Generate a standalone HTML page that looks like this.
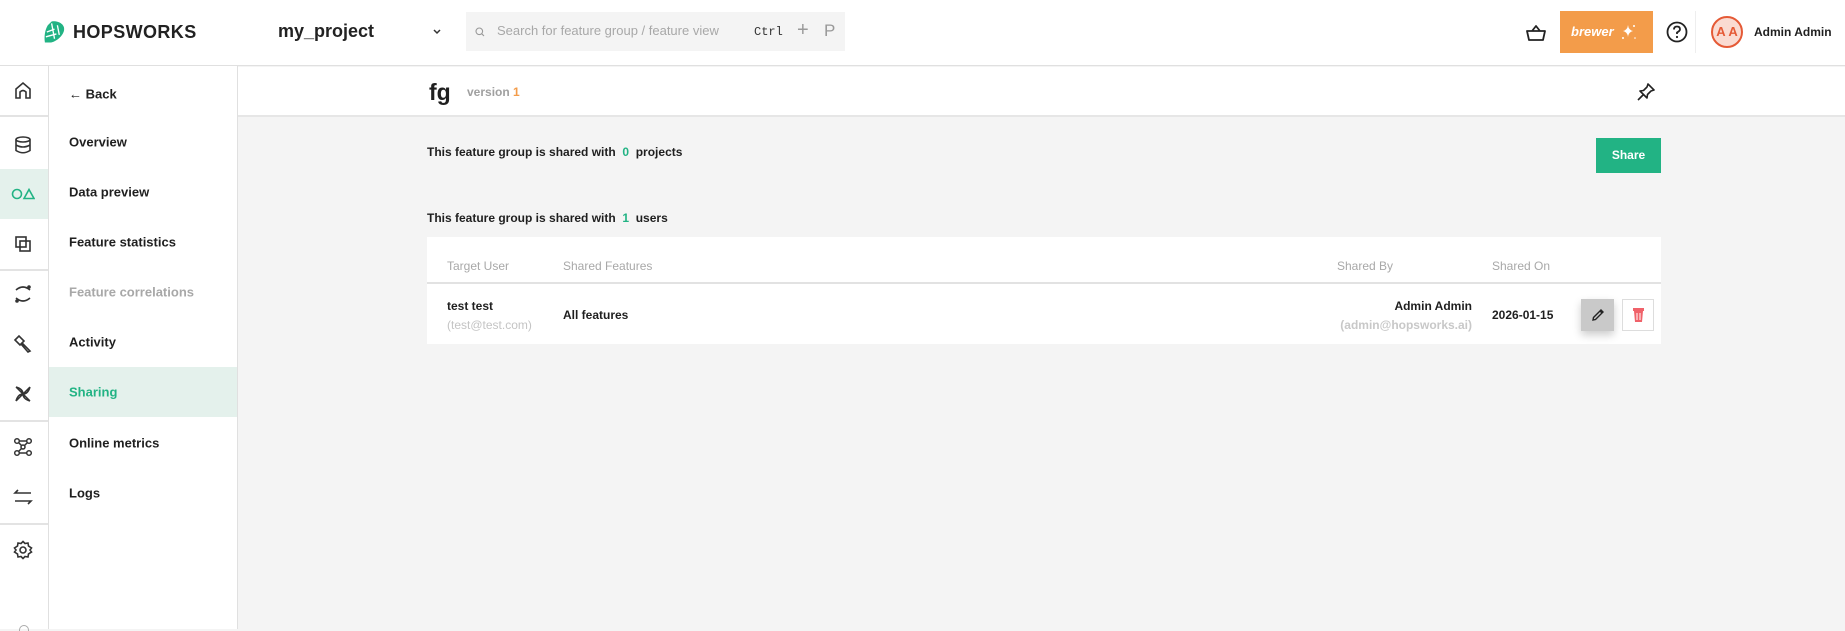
<!DOCTYPE html>
<html><head><meta charset="utf-8"><style>
*{margin:0;padding:0;box-sizing:border-box}
body{width:1845px;height:629px;overflow:hidden;background:#f4f4f4;font-family:"Liberation Sans",Arial,sans-serif;color:#1f1f1f;position:relative}
.a{position:absolute;white-space:nowrap}
.b{font-weight:bold}
.hdr{position:absolute;left:0;top:0;width:1845px;height:66px;background:#fff;border-bottom:1px solid #e0e0e0}
.rail{position:absolute;left:0;top:66px;width:49px;height:563px;background:#fff;border-right:1px solid #e0e0e0}
.sub{position:absolute;left:49px;top:66px;width:189px;height:563px;background:#fff;border-right:1px solid #e0e0e0}
.sep{position:absolute;left:0;width:48px;height:2px;background:#e3e3e3}
.nav{position:absolute;left:20px;font-size:13px;font-weight:bold;transform:translateY(-50%)}
.ic{position:absolute;left:13px}
</style></head><body>
<div class="hdr"></div>
<svg class="a" style="left:43px;top:20px" width="23" height="24" viewBox="0 0 24 24"><path d="M9 1 C16 0 23 4 22 10 C21 16 14 22 8 23 L2 23 C1 17 2 10 5 5 Z" fill="#22b384"/><path d="M4 12 L12 9 M3 17 L14 14 M9 3 L12 19 M15 5 L17 15" stroke="#fff" stroke-width="1.4" fill="none"/></svg>
<div class="a b" style="left:73px;top:22px;font-size:18px;letter-spacing:0.4px;color:#222">HOPSWORKS</div>
<div class="a b" style="left:278px;top:21px;font-size:18px;color:#222">my_project</div>
<svg class="a" style="left:432px;top:28px" width="10" height="8" viewBox="0 0 10 8"><path d="M2 2 L5 5 L8 2" stroke="#333" stroke-width="1.5" fill="none"/></svg>
<div class="a" style="left:466px;top:12px;width:379px;height:39px;background:#f4f4f4"></div>
<svg class="a" style="left:475px;top:27px" width="10" height="10" viewBox="0 0 10 10"><circle cx="4.3" cy="4.3" r="3.3" stroke="#999" stroke-width="1.1" fill="none"/><path d="M6.8 6.8 L9 9" stroke="#999" stroke-width="1.1"/></svg>
<div class="a" style="left:497px;top:23px;font-size:13px;color:#a8a8a8">Search for feature group / feature view</div>
<div class="a" style="left:754px;top:25px;font-size:12px;font-family:'Liberation Mono',monospace;color:#333">Ctrl</div>
<div class="a" style="left:797px;top:19px;font-size:20px;color:#999">+</div>
<div class="a" style="left:824px;top:21px;font-size:17px;color:#999">P</div>
<svg class="a" style="left:1526px;top:24px" width="20" height="18" viewBox="0 0 20 18"><path d="M6 7 L10 2 L14 7 M1 7 H19 L17 16 H3 Z" stroke="#222" stroke-width="1.8" fill="none" stroke-linejoin="round"/></svg>
<div class="a" style="left:1560px;top:11px;width:93px;height:42px;background:#f39c4a"></div>
<div class="a b" style="left:1571px;top:24px;font-size:13px;font-style:italic;color:#fff">brewer</div>
<svg class="a" style="left:1620px;top:23px" width="18" height="18" viewBox="0 0 18 18"><path d="M8 2 Q8.5 7 13 8 Q8.5 9 8 14 Q7.5 9 3 8 Q7.5 7 8 2Z" fill="#fff"/><circle cx="14" cy="3" r="1" fill="#fff"/><circle cx="3" cy="15" r="1" fill="#fff"/><circle cx="15" cy="15" r="0.8" fill="#fff"/></svg>
<svg class="a" style="left:1666px;top:21px" width="22" height="22" viewBox="0 0 22 22"><circle cx="11" cy="11" r="9.5" stroke="#222" stroke-width="1.8" fill="none"/><path d="M8 8.5 Q8 5.5 11 5.5 Q14 5.5 14 8.3 Q14 10 11 11.5 V13" stroke="#222" stroke-width="1.8" fill="none"/><circle cx="11" cy="16" r="1.1" fill="#222"/></svg>
<div class="a" style="left:1695px;top:11px;width:1px;height:42px;background:#eee"></div>
<div class="a" style="left:1711px;top:16px;width:32px;height:32px;border-radius:50%;border:2px solid #e55a36;background:#fadbd2;color:#e55a36;font-size:13px;font-weight:bold;text-align:center;line-height:28px">A A</div>
<div class="a b" style="left:1754px;top:25px;font-size:12px">Admin Admin</div>

<div class="rail">
<div class="sep" style="top:49px"></div>
<div class="a" style="left:0;top:103px;width:48px;height:50px;background:#e4f1ec"></div>
<div class="sep" style="top:203px"></div>
<div class="sep" style="top:354px"></div>
<div class="sep" style="top:457px"></div>
<svg class="ic" style="top:15px" width="20" height="20" viewBox="0 0 20 20" fill="none" stroke="#333" stroke-width="1.6"><path d="M3 17 V8 L10 2 L17 8 V17 H13 V11 Q10 8 7 11 V17 Z"/></svg>
<svg class="ic" style="top:69px" width="20" height="20" viewBox="0 0 20 20" fill="none" stroke="#333" stroke-width="1.6"><ellipse cx="10" cy="4.5" rx="7" ry="2.5"/><path d="M3 4.5 V15.5 Q10 20 17 15.5 V4.5 M3 10 Q10 14 17 10"/></svg>
<svg class="ic" style="top:120px;left:11px" width="24" height="16" viewBox="0 0 24 16" fill="none" stroke="#22b384" stroke-width="1.6"><circle cx="6" cy="8" r="4.5"/><path d="M13 12.5 L18 3.5 L23 12.5 Z"/></svg>
<svg class="ic" style="top:168px" width="20" height="20" viewBox="0 0 20 20" fill="none" stroke="#333" stroke-width="1.6"><rect x="3" y="3" width="10" height="10"/><rect x="7" y="7" width="10" height="10"/></svg>
<svg class="ic" style="top:218px" width="20" height="20" viewBox="0 0 20 20" fill="none" stroke="#333" stroke-width="1.6"><path d="M3 6 Q10 0 17 6 M3 14 Q10 20 17 14"/><circle cx="16" cy="3" r="1" fill="#333"/><circle cx="4" cy="17" r="1" fill="#333"/></svg>
<svg class="ic" style="top:268px" width="20" height="20" viewBox="0 0 20 20" fill="none" stroke="#333" stroke-width="1.6"><path d="M2 6 L6 2 L11 7 L7 11 Z M9 9 L17 17 L15 18 L8 10"/></svg>
<svg class="ic" style="top:318px" width="20" height="20" viewBox="0 0 20 20" fill="none" stroke="#333" stroke-width="1.5"><path d="M3 3 L17 17 M17 3 L3 17 M3 3 Q10 5 10 10 M17 3 Q15 10 10 10 M17 17 Q10 15 10 10 M3 17 Q5 10 10 10"/></svg>
<svg class="ic" style="top:371px" width="20" height="20" viewBox="0 0 20 20" fill="none" stroke="#333" stroke-width="1.5"><circle cx="4" cy="4" r="2.3"/><circle cx="16" cy="4" r="2.3"/><circle cx="4" cy="16" r="2.3"/><circle cx="16" cy="16" r="2.3"/><circle cx="10" cy="10" r="2"/><path d="M6 4 H14 M6 16 H14 M5.5 5.5 L8.5 8.5 M14.5 5.5 L11.5 8.5 M5.5 14.5 L8.5 11.5"/></svg>
<svg class="ic" style="top:421px" width="20" height="20" viewBox="0 0 20 20" fill="none" stroke="#333" stroke-width="1.6"><path d="M18 6 H2 L5 3 M2 14 H18 L15 17"/></svg>
<svg class="ic" style="top:474px" width="20" height="20" viewBox="0 0 20 20" fill="none" stroke="#333" stroke-width="1.6"><circle cx="10" cy="10" r="3"/><path d="M10 1.5 L12 3.5 L15 3 L15.5 6 L18.5 8 L17 10 L18.5 12 L15.5 14 L15 17 L12 16.5 L10 18.5 L8 16.5 L5 17 L4.5 14 L1.5 12 L3 10 L1.5 8 L4.5 6 L5 3 L8 3.5 Z"/></svg>
<div class="a" style="left:19px;top:559px;width:10px;height:6px;border-radius:5px 5px 0 0;border:1.6px solid #aaa;border-bottom:none"></div>
</div>

<div class="sub">
<div class="a" style="left:0;top:301px;width:188px;height:50px;background:#e4f1ec"></div>
<div class="nav" style="top:28px">← Back</div>
<div class="nav" style="top:76px">Overview</div>
<div class="nav" style="top:126px">Data preview</div>
<div class="nav" style="top:176px">Feature statistics</div>
<div class="nav" style="top:226px;color:#a8a8a8">Feature correlations</div>
<div class="nav" style="top:276px">Activity</div>
<div class="nav" style="top:326px;color:#22b384">Sharing</div>
<div class="nav" style="top:377px">Online metrics</div>
<div class="nav" style="top:427px">Logs</div>
</div>

<div class="a" style="left:238px;top:67px;width:1607px;height:50px;background:#fff;border-bottom:2px solid #e6e6e6"></div>
<div class="a b" style="left:429px;top:79px;font-size:23px">fg</div>
<div class="a b" style="left:467px;top:85px;font-size:12px;color:#a0a0a0">version <span style="color:#f39c4a">1</span></div>
<svg class="a" style="left:1636px;top:82px" width="20" height="20" viewBox="0 0 20 20" fill="none" stroke="#222" stroke-width="1.6" stroke-linejoin="round"><path d="M12 2 L18 8 L15 9 L11.5 12.5 L11 16 L4 9 L7.5 8.5 L11 5 Z M7.5 12.5 L2 18"/></svg>

<div class="a b" style="left:427px;top:145px;font-size:12px">This feature group is shared with &nbsp;<span style="color:#22b384">0</span>&nbsp; projects</div>
<div class="a b" style="left:1596px;top:138px;width:65px;height:35px;background:#22b384;color:#fff;font-size:12px;text-align:center;line-height:35px">Share</div>
<div class="a b" style="left:427px;top:211px;font-size:12px">This feature group is shared with &nbsp;<span style="color:#22b384">1</span>&nbsp; users</div>

<div class="a" style="left:427px;top:237px;width:1234px;height:107px;background:#fff"></div>
<div class="a" style="left:427px;top:282px;width:1234px;height:2px;background:#e2e2e2"></div>
<div class="a" style="left:447px;top:259px;font-size:12px;color:#a8a8a8">Target User</div>
<div class="a" style="left:563px;top:259px;font-size:12px;color:#a8a8a8">Shared Features</div>
<div class="a" style="left:1337px;top:259px;font-size:12px;color:#a8a8a8">Shared By</div>
<div class="a" style="left:1492px;top:259px;font-size:12px;color:#a8a8a8">Shared On</div>
<div class="a b" style="left:447px;top:299px;font-size:12px">test test</div>
<div class="a" style="left:447px;top:318px;font-size:12px;color:#c4c4c4">(test@test.com)</div>
<div class="a b" style="left:563px;top:308px;font-size:12px">All features</div>
<div class="a b" style="left:1300px;width:172px;text-align:right;top:299px;font-size:12px">Admin Admin</div>
<div class="a b" style="left:1300px;width:172px;text-align:right;top:318px;font-size:12px;color:#c8c8c8">(admin@hopsworks.ai)</div>
<div class="a b" style="left:1492px;top:308px;font-size:12px">2026-01-15</div>
<div class="a" style="left:1581px;top:299px;width:33px;height:32px;background:#c9c9c9;box-shadow:0 4px 8px rgba(0,0,0,0.2)"></div>
<svg class="a" style="left:1591px;top:308px" width="14" height="14" viewBox="0 0 14 14" fill="none" stroke="#222" stroke-width="1.4"><path d="M2 12 L2.5 9.5 L10 2 L12 4 L4.5 11.5 Z M9 3 L11 5"/></svg>
<div class="a" style="left:1622px;top:299px;width:32px;height:32px;background:#fff;border:1px solid #ddd"></div>
<svg class="a" style="left:1632px;top:307px" width="13" height="16" viewBox="0 0 13 16"><rect x="1" y="1" width="11" height="3" fill="#f0626a"/><path d="M2 4 H11 L10 15 H3 Z" fill="#f0626a"/><path d="M5 6 V13 M8 6 V13" stroke="#fff" stroke-width="1"/></svg>
</body></html>
